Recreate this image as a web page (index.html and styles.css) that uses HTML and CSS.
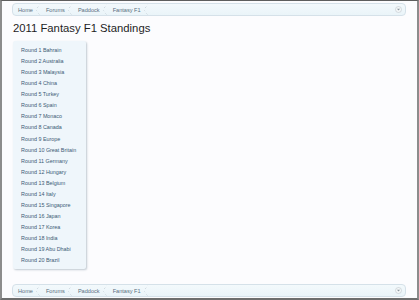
FILE: index.html
```html
<!DOCTYPE html>
<html>
<head>
<meta charset="utf-8">
<link rel="stylesheet" href="styles.css">
</head>
<body>
<div class="frame">
  <nav class="crumbs">
    <span class="crumb first">Home</span>
    <span class="sep"></span>
    <span class="crumb">Forums</span>
    <span class="sep"></span>
    <span class="crumb">Paddock</span>
    <span class="sep"></span>
    <span class="crumb">Fantasy F1</span>
    <span class="sep"></span>
    <span class="jump"><svg width="7" height="7" viewBox="0 0 7 7"><circle cx="3.5" cy="3.5" r="3" fill="#f4f7f9" stroke="#c5cdd3" stroke-width="0.7"/><path d="M2 2.8h3L3.5 4.6z" fill="#8a959d"/></svg></span>
  </nav>
  <h1 class="title">2011 Fantasy F1 Standings</h1>
  <ul class="rounds">
    <li>Round 1 Bahrain</li>
    <li>Round 2 Australia</li>
    <li>Round 3 Malaysia</li>
    <li>Round 4 China</li>
    <li>Round 5 Turkey</li>
    <li>Round 6 Spain</li>
    <li>Round 7 Monaco</li>
    <li>Round 8 Canada</li>
    <li>Round 9 Europe</li>
    <li>Round 10 Great Britain</li>
    <li>Round 11 Germany</li>
    <li>Round 12 Hungary</li>
    <li>Round 13 Belgium</li>
    <li>Round 14 Italy</li>
    <li>Round 15 Singapore</li>
    <li>Round 16 Japan</li>
    <li>Round 17 Korea</li>
    <li>Round 18 India</li>
    <li>Round 19 Abu Dhabi</li>
    <li>Round 20 Brazil</li>
  </ul>
  <nav class="crumbs bottom">
    <span class="crumb first">Home</span>
    <span class="sep"></span>
    <span class="crumb">Forums</span>
    <span class="sep"></span>
    <span class="crumb">Paddock</span>
    <span class="sep"></span>
    <span class="crumb">Fantasy F1</span>
    <span class="sep"></span>
    <span class="jump"><svg width="7" height="7" viewBox="0 0 7 7"><circle cx="3.5" cy="3.5" r="3" fill="#f4f7f9" stroke="#c5cdd3" stroke-width="0.7"/><path d="M2 2.8h3L3.5 4.6z" fill="#8a959d"/></svg></span>
  </nav>
</div>
</body>
</html>
```
FILE: styles.css
```css
html, body {
  margin: 0;
  padding: 0;
}
body {
  width: 419px;
  height: 300px;
  overflow: hidden;
  font-family: "Liberation Sans", "DejaVu Sans", sans-serif;
}
.frame {
  box-sizing: border-box;
  width: 419px;
  height: 300px;
  border-top: 1px solid #5e5e5e;
  border-left: 2px solid #8c8c8c;
  border-right: 2px solid #8c8c8c;
  border-bottom: 2px solid #6e6e6e;
  background: #fcfcfe;
  padding: 2px 11px 0 10px;
  display: flex;
  flex-direction: column;
}
.crumbs {
  box-sizing: border-box;
  height: 13px;
  border: 1px solid #d5e1e9;
  border-radius: 4px;
  background: linear-gradient(#f3f9fc, #eaf4f9);
  display: flex;
  align-items: center;
  padding-left: 5px;
  font-size: 5.6px;
  color: #5a6f80;
}
.crumb {
  white-space: nowrap;
}
.sep {
  width: 4px;
  height: 11px;
  margin: 0 6px 0 3px;
  background: linear-gradient(to bottom right, transparent 48%, #cfd9e0 50%, transparent 56%) top / 100% 50% no-repeat,
              linear-gradient(to top right, transparent 48%, #cfd9e0 50%, transparent 56%) bottom / 100% 50% no-repeat;
}
.jump {
  margin-left: auto;
  margin-right: 3px;
  display: flex;
}
.title {
  margin: 5px 0 0 1px;
  font-family: "Liberation Sans", sans-serif;
  font-weight: normal;
  font-size: 11.3px;
  line-height: 15px;
  color: #1e1e1e;
}
.rounds {
  list-style: none;
  margin: 5px 0 0 1px;
  padding: 4px 0 0 8px;
  box-sizing: border-box;
  width: 73px;
  height: 228px;
  background: #eff6fb;
  border-radius: 2px;
  box-shadow: 1px 1px 2px rgba(120, 140, 155, 0.45);
  font-size: 5.4px;
  color: #3b5a75;
}
.rounds li {
  height: 11.07px;
  line-height: 11.07px;
  white-space: nowrap;
}
.bottom {
  margin-top: 15px;
}
```
